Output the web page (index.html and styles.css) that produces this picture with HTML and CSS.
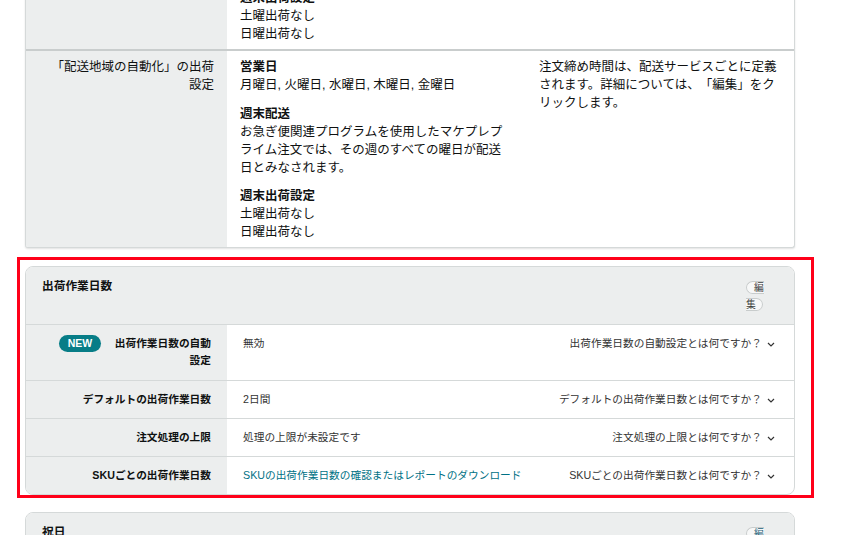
FILE: index.html
```html
<!DOCTYPE html>
<html lang="ja">
<head>
<meta charset="utf-8">
<title>出荷設定</title>
<link rel="stylesheet" href="styles.css">
</head>
<body>
<div class="page">
  <section class="card card-top">
    <div class="trow">
      <div class="tlabel"></div>
      <div class="tvalue">
        <div class="group">
          <div class="gtitle">週末出荷設定</div>
          <div>土曜出荷なし</div>
          <div>日曜出荷なし</div>
        </div>
      </div>
      <div class="tnote"></div>
    </div>
    <div class="trow">
      <div class="tlabel">「配送地域の自動化」の出荷設定</div>
      <div class="tvalue">
        <div class="group">
          <div class="gtitle">営業日</div>
          <div>月曜日, 火曜日, 水曜日, 木曜日, 金曜日</div>
        </div>
        <div class="group">
          <div class="gtitle">週末配送</div>
          <div>お急ぎ便関連プログラムを使用したマケプレプライム注文では、その週のすべての曜日が配送日とみなされます。</div>
        </div>
        <div class="group">
          <div class="gtitle">週末出荷設定</div>
          <div>土曜出荷なし</div>
          <div>日曜出荷なし</div>
        </div>
      </div>
      <div class="tnote">注文締め時間は、配送サービスごとに定義されます。詳細については、「編集」をクリックします。</div>
    </div>
  </section>

  <section class="card card-small">
    <header class="card-head">
      <h2>出荷作業日数</h2>
      <span class="edit-wrap"><span class="edit">編集</span></span>
    </header>
    <div class="row row-tall">
      <div class="rlabel"><span class="badge">NEW</span><span class="narrow">出荷作業日数の自動設定</span></div>
      <div class="rvalue">無効</div>
      <div class="rhelp">出荷作業日数の自動設定とは何ですか？<svg class="chev" width="8" height="5" viewBox="0 0 8 5"><path d="M1 1 L4 4 L7 1" fill="none" stroke="#333" stroke-width="1.2"/></svg></div>
    </div>
    <div class="row">
      <div class="rlabel">デフォルトの出荷作業日数</div>
      <div class="rvalue">2日間</div>
      <div class="rhelp">デフォルトの出荷作業日数とは何ですか？<svg class="chev" width="8" height="5" viewBox="0 0 8 5"><path d="M1 1 L4 4 L7 1" fill="none" stroke="#333" stroke-width="1.2"/></svg></div>
    </div>
    <div class="row">
      <div class="rlabel">注文処理の上限</div>
      <div class="rvalue">処理の上限が未設定です</div>
      <div class="rhelp">注文処理の上限とは何ですか？<svg class="chev" width="8" height="5" viewBox="0 0 8 5"><path d="M1 1 L4 4 L7 1" fill="none" stroke="#333" stroke-width="1.2"/></svg></div>
    </div>
    <div class="row">
      <div class="rlabel">SKUごとの出荷作業日数</div>
      <div class="rvalue"><a class="link" href="#">SKUの出荷作業日数の確認またはレポートのダウンロード</a></div>
      <div class="rhelp">SKUごとの出荷作業日数とは何ですか？<svg class="chev" width="8" height="5" viewBox="0 0 8 5"><path d="M1 1 L4 4 L7 1" fill="none" stroke="#333" stroke-width="1.2"/></svg></div>
    </div>
  </section>

  <section class="card card-small">
    <header class="card-head">
      <h2>祝日</h2>
      <span class="edit-wrap"><span class="edit edit-active">編集</span></span>
    </header>
  </section>
</div>
<div class="highlight"></div>
</body>
</html>
```
FILE: styles.css
```css
html, body {
  margin: 0;
  padding: 0;
  overflow: hidden;
  background: #fff;
}
body {
  font-family: "Liberation Sans", "Noto Sans CJK JP", sans-serif;
  color: #0f1111;
  text-spacing-trim: space-all;
}
.page {
  width: 770px;
  padding-left: 25px;
}
.card {
  border: 1px solid #d5d9d9;
  border-radius: 8px;
  background: #fff;
  overflow: hidden;
  margin-bottom: 17px;
}
.card-top {
  margin-top: -18px;
  border-top: none;
  border-radius: 0 0 3px 3px;
  box-shadow: 0 1px 2px rgba(0, 0, 0, 0.12);
  margin-bottom: 18px;
  font-size: 12.5px;
  line-height: 18px;
}
.trow {
  display: grid;
  grid-template-columns: 201px 300px 1fr;
}
.trow + .trow {
  border-top: 2px solid #c9cdcd;
}
.tlabel {
  background: #eceeee;
  padding: 7px 13px 6px 20px;
  text-align: right;
}
.tvalue {
  padding: 7px 14px 6px 13px;
}
.tnote {
  padding: 7px 15px 6px 12px;
}
.group + .group {
  margin-top: 10.5px;
}
.gtitle {
  font-weight: bold;
}

.card-small {
  font-size: 10.7px;
  line-height: 17px;
}
.card-head {
  display: flex;
  justify-content: space-between;
  align-items: flex-start;
  background: #eceeee;
  padding: 12px 29px 11px 16px;
  border-bottom: 1px solid #d5d9d9;
}
.card-head h2 {
  margin: -2px 0 0;
  font-size: 11.7px;
  line-height: 17px;
  font-weight: bold;
}
.edit-wrap {
  display: block;
  width: 19px;
  font-size: 9.8px;
  line-height: 17px;
}
.edit {
  border: 1px solid #c8cccc;
  border-radius: 9px;
  padding: 0 6px 0 7px;
  background: #f7f8f8;
  color: #3d4040;
}
.edit-active {
  color: #1b5f77;
}
.row {
  display: grid;
  grid-template-columns: 201px 1fr auto;
}
.row + .row {
  border-top: 1px solid #d5d9d9;
}
.row-tall > div {
  padding-bottom: 11px;
}
.rlabel {
  background: #eceeee;
  padding: 10px 16px 10px 10px;
  display: flex;
  justify-content: flex-end;
  align-items: flex-start;
  gap: 13px;
  font-weight: bold;
  text-align: right;
}
.narrow {
  max-width: 97px;
}
.badge {
  flex: none;
  width: 42px;
  background: #077d87;
  color: #fff;
  font-size: 10.5px;
  line-height: 17px;
  border-radius: 9px;
  text-align: center;
}
.rvalue {
  padding: 10px 16px;
  color: #333;
}
.rhelp {
  padding: 10px 19px 10px 16px;
  color: #333;
  white-space: nowrap;
}
.chev {
  margin-left: 5px;
  vertical-align: middle;
}
.link {
  color: #007185;
  text-decoration: none;
}
.highlight {
  position: absolute;
  left: 17px;
  top: 257px;
  width: 797px;
  height: 241px;
  box-sizing: border-box;
  border: 3px solid #ff0019;
  pointer-events: none;
}
```
